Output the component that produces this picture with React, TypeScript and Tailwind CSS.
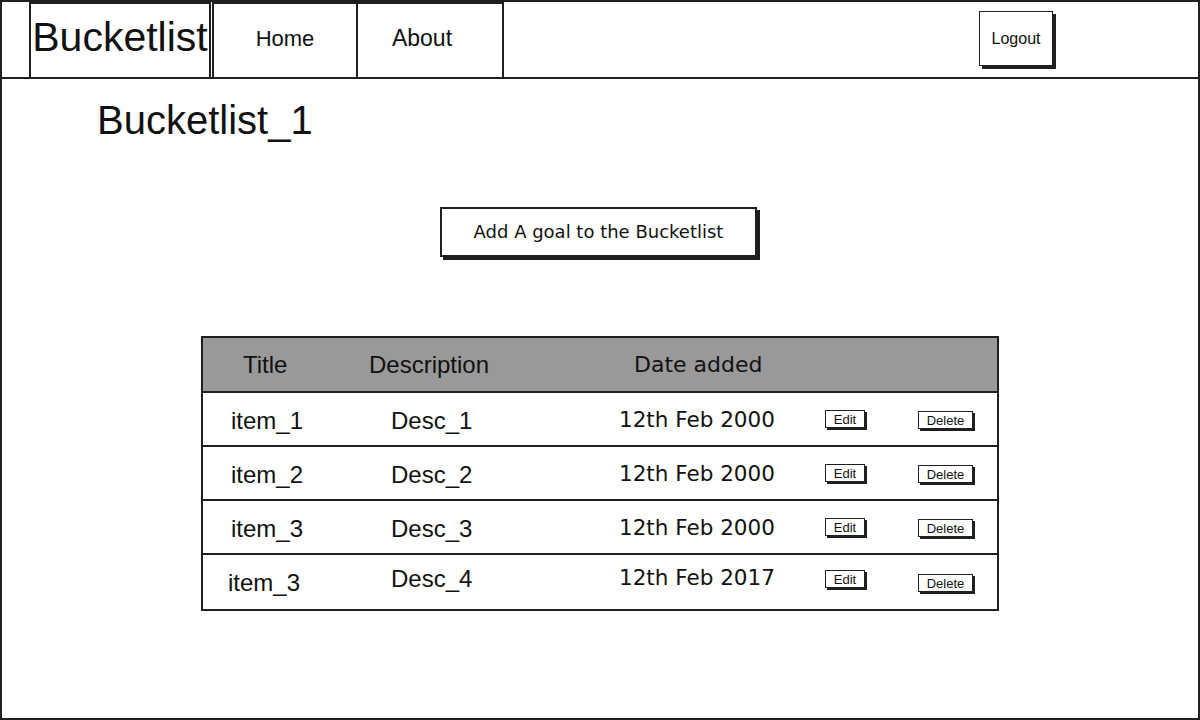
const goals = [
  { title: "item_1", desc: "Desc_1", date: "12th Feb 2000", last: false },
  { title: "item_2", desc: "Desc_2", date: "12th Feb 2000", last: false },
  { title: "item_3", desc: "Desc_3", date: "12th Feb 2000", last: false },
  { title: "item_3", desc: "Desc_4", date: "12th Feb 2017", last: true },
];

function SmallButton({ label, width }: { label: string; width: string }) {
  return (
    <button
      className={`${width} h-[18px] flex items-center justify-center border border-[#1f1f1f] bg-white shadow-[2px_2px_0_#1f1f1f] text-[13px] leading-none`}
    >
      {label}
    </button>
  );
}

export default function App() {
  return (
    <div className="w-[1200px] h-[720px] bg-white border-2 border-[#1f1f1f] flex flex-col font-['Liberation_Sans',Arial,sans-serif] text-[#111]">
      {/* Top nav */}
      <nav className="h-[77px] shrink-0 flex border-b-2 border-[#1f1f1f]">
        <div className="w-[27px]" />
        <div className="w-[182px] border-2 border-b-0 border-[#1f1f1f] flex items-center justify-center pb-[6px] text-[41px] leading-none">
          Bucketlist
        </div>
        <a className="ml-[1px] w-[146px] border-2 border-b-0 border-[#1f1f1f] flex items-center justify-center pb-[4px] text-[22px] leading-none">
          Home
        </a>
        <a className="w-[146px] border-2 border-l-0 border-b-0 border-[#1f1f1f] flex items-center justify-center pb-[4px] pr-[16px] text-[23px] leading-none">
          About
        </a>
        <button className="ml-auto mr-[145px] mt-[9px] self-start w-[74px] h-[55px] flex items-center justify-center border border-[#1f1f1f] bg-white shadow-[3px_3px_0_#1f1f1f] text-[16px] leading-none">
          Logout
        </button>
      </nav>

      <main className="flex-1 flex flex-col items-start">
        <h1 className="mt-[21px] ml-[95px] text-[40px] leading-[40px] font-normal">
          Bucketlist_1
        </h1>

        <button className="mt-[67px] ml-[438px] w-[317px] h-[50px] flex items-center justify-center border-2 border-[#1f1f1f] bg-white shadow-[3px_3px_0_#1f1f1f] font-['DejaVu_Sans',sans-serif] text-[18px] leading-none">
          Add A goal to the Bucketlist
        </button>

        {/* Goals table */}
        <div className="mt-[79px] ml-[199px] w-[798px] border-2 border-[#1f1f1f]">
          <div className="h-[55px] grid grid-cols-[150px_250px_205px_92px_1fr] items-center bg-[#999999] border-b-2 border-[#1f1f1f] text-[24px] leading-none">
            <span className="pl-[40px]">Title</span>
            <span className="pl-[16px]">Description</span>
            <span className="pl-[31px] font-['DejaVu_Sans',sans-serif] text-[22px]">Date added</span>
            <span />
            <span />
          </div>
          {goals.map((g, i) => (
            <div
              key={i}
              className={
                g.last
                  ? "h-[54px] grid grid-cols-[150px_250px_205px_92px_1fr] items-center text-[24px] leading-none"
                  : "h-[54px] grid grid-cols-[150px_250px_205px_92px_1fr] items-center border-b-2 border-[#1f1f1f] text-[24px] leading-none"
              }
            >
              <span className={g.last ? "pl-[25px] pt-[2px]" : "pl-[28px] pt-[3px]"}>{g.title}</span>
              <span className={g.last ? "pl-[38px] pb-[6px]" : "pl-[38px] pt-[3px]"}>{g.desc}</span>
              <span
                className={
                  g.last
                    ? "pl-[16px] pb-[8px] font-['DejaVu_Sans',sans-serif] text-[21.5px]"
                    : "pl-[16px] pt-[2px] font-['DejaVu_Sans',sans-serif] text-[21.5px]"
                }
              >
                {g.date}
              </span>
              <span className={g.last ? "pl-[17px] pb-[6px]" : "pl-[17px]"}>
                <SmallButton label="Edit" width="w-[40px]" />
              </span>
              <span className="pl-[18px] pt-[2px]">
                <SmallButton label="Delete" width="w-[55px]" />
              </span>
            </div>
          ))}
        </div>
      </main>
    </div>
  );
}
